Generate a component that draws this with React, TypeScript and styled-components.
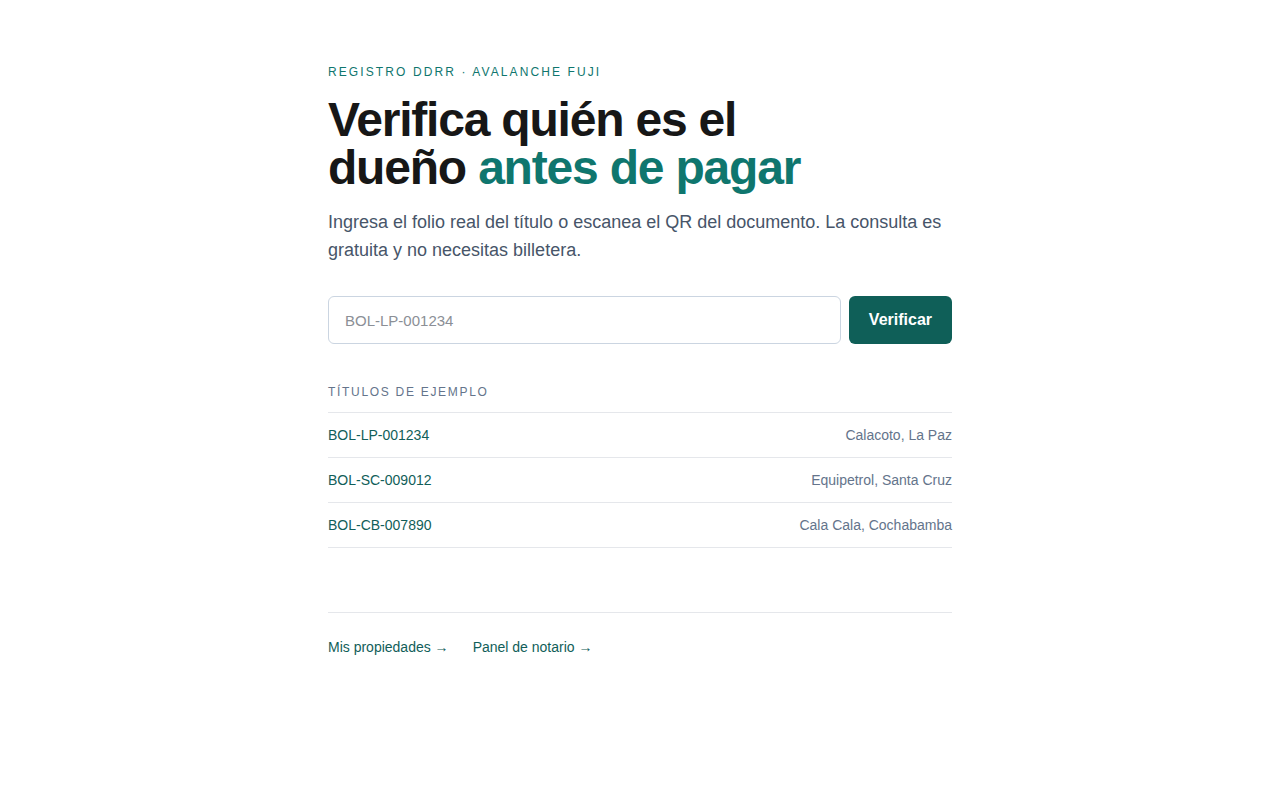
import React from "react";
import styled, { createGlobalStyle } from "styled-components";

const Global = createGlobalStyle`
  * { box-sizing: border-box; }
  html, body { margin: 0; padding: 0; background: #ffffff; }
  body { font-family: "Liberation Sans", Arial, Helvetica, sans-serif; color: #171717; }
`;

const Page = styled.main`
  width: 624px;
  margin: 0 auto;
  padding-top: 64px;
`;

const Eyebrow = styled.div`
  font-size: 12px;
  line-height: 16px;
  letter-spacing: 2.1px;
  color: #0f766e;
  text-transform: uppercase;
`;

const Title = styled.h1`
  margin: 16px 0 0;
  font-size: 48px;
  line-height: 48px;
  font-weight: 700;
  letter-spacing: -1.2px;
  color: #171717;
`;

const Accent = styled.span`
  color: #0f766e;
`;

const Lead = styled.p`
  margin: 16px 0 0;
  font-size: 18px;
  line-height: 28px;
  color: #475569;
`;

const Form = styled.form`
  display: flex;
  gap: 8px;
  margin-top: 32px;
`;

const Input = styled.input`
  flex: 1;
  height: 48px;
  padding: 0 16px;
  border: 1px solid #cbd5e1;
  border-radius: 6px;
  font-family: inherit;
  font-size: 15px;
  color: #171717;
  outline: none;
  &::placeholder { color: #8b8f96; }
`;

const Button = styled.button`
  height: 48px;
  padding: 0 20px;
  border: none;
  border-radius: 6px;
  background: #0f5f58;
  color: #ffffff;
  font-family: inherit;
  font-size: 16px;
  font-weight: 700;
  cursor: pointer;
`;

const SectionLabel = styled.div`
  margin-top: 40px;
  font-size: 12px;
  line-height: 16px;
  letter-spacing: 1.7px;
  color: #64748b;
  text-transform: uppercase;
`;

const List = styled.ul`
  list-style: none;
  margin: 12px 0 0;
  padding: 0;
  border-top: 1px solid #e5e7eb;
`;

const Row = styled.li`
  display: flex;
  justify-content: space-between;
  align-items: center;
  height: 45px;
  border-bottom: 1px solid #e5e7eb;
  font-size: 14px;
`;

const Folio = styled.a`
  color: #115e59;
  text-decoration: none;
`;

const Place = styled.span`
  color: #64748b;
`;

const Footer = styled.footer`
  margin-top: 64px;
  border-top: 1px solid #e5e7eb;
  padding-top: 26px;
  display: flex;
  gap: 24px;
  font-size: 14px;
`;

const FootLink = styled.a`
  color: #115e59;
  text-decoration: none;
`;

const examples = [
  { folio: "BOL-LP-001234", place: "Calacoto, La Paz" },
  { folio: "BOL-SC-009012", place: "Equipetrol, Santa Cruz" },
  { folio: "BOL-CB-007890", place: "Cala Cala, Cochabamba" },
];

export default function App() {
  return (
    <>
      <Global />
      <Page>
        <Eyebrow>Registro DDRR · Avalanche Fuji</Eyebrow>
        <Title>
          Verifica quién es el
          <br />
          dueño <Accent>antes de pagar</Accent>
        </Title>
        <Lead>
          Ingresa el folio real del título o escanea el QR del documento. La consulta es gratuita y no necesitas billetera.
        </Lead>
        <Form onSubmit={(e) => e.preventDefault()}>
          <Input placeholder="BOL-LP-001234" />
          <Button type="submit">Verificar</Button>
        </Form>
        <SectionLabel>Títulos de ejemplo</SectionLabel>
        <List>
          {examples.map((ex) => (
            <Row key={ex.folio}>
              <Folio href="#">{ex.folio}</Folio>
              <Place>{ex.place}</Place>
            </Row>
          ))}
        </List>
        <Footer>
          <FootLink href="#">Mis propiedades →</FootLink>
          <FootLink href="#">Panel de notario →</FootLink>
        </Footer>
      </Page>
    </>
  );
}
